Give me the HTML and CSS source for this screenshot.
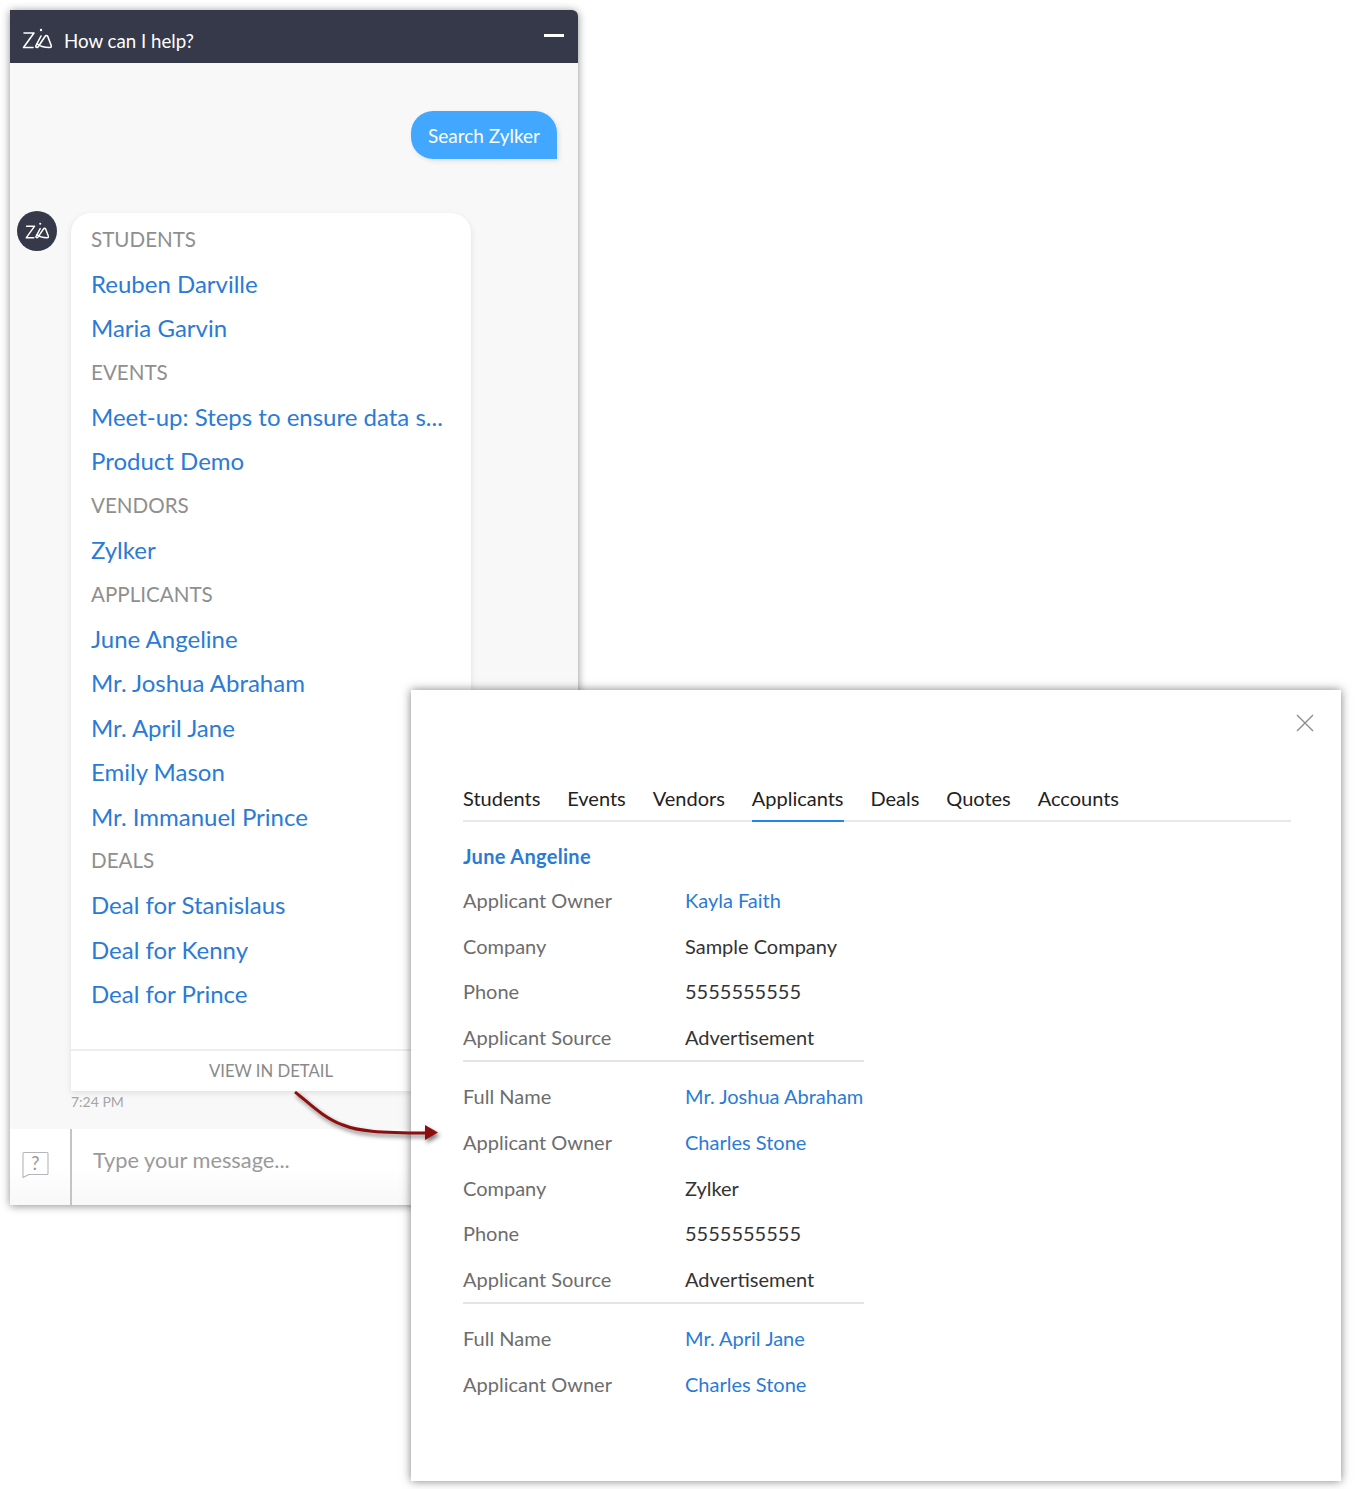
FILE: index.html
```html
<!DOCTYPE html>
<html lang="en">
<head>
  <meta charset="UTF-8">
  <title>How can I help?</title>
  <link rel="stylesheet" href="styles.css">
</head>
<body>

  <div class="chat">
    <header class="chat-head">
      <svg class="logo" viewBox="0 0 30 22" fill="none" stroke="#fff" stroke-width="1.600" stroke-linecap="round" stroke-linejoin="round">
        <path d="M2 5h10L1.500 19.500h9.500"/>
        <path d="M19 8l-5 9.500c-.8 1.500.5 2.500 2 1.500L23 8.500c.8-1.300 2-1.300 2.800 0l3.400 9c.5 1.300-.2 2-1.400 2-5 0-10-1-13-4"/>
        <circle cx="19" cy="2" r="1.200" fill="#fff" stroke="none"/>
      </svg>
      <span class="chat-title">How can I help?</span>
      <span class="minimize"></span>
    </header>

    <div class="chat-body">
      <div class="bubble">Search Zylker</div>

      <div class="reply">
        <div class="avatar">
          <svg class="logo-small" viewBox="0 0 30 22" fill="none" stroke="#fff" stroke-width="1.800" stroke-linecap="round" stroke-linejoin="round">
            <path d="M2 5h10L1.500 19.500h9.500"/>
            <path d="M19 8l-5 9.500c-.8 1.500.5 2.500 2 1.500L23 8.500c.8-1.300 2-1.300 2.800 0l3.400 9c.5 1.300-.2 2-1.400 2-5 0-10-1-13-4"/>
            <circle cx="19" cy="2" r="1.300" fill="#fff" stroke="none"/>
          </svg>
        </div>
        <div class="reply-main">
          <div class="card">
            <ul class="results">
              <li class="group">STUDENTS</li>
              <li><a href="#">Reuben Darville</a></li>
              <li><a href="#">Maria Garvin</a></li>
              <li class="group">EVENTS</li>
              <li><a href="#">Meet-up: Steps to ensure data s...</a></li>
              <li><a href="#">Product Demo</a></li>
              <li class="group">VENDORS</li>
              <li><a href="#">Zylker</a></li>
              <li class="group">APPLICANTS</li>
              <li><a href="#">June Angeline</a></li>
              <li><a href="#">Mr. Joshua Abraham</a></li>
              <li><a href="#">Mr. April Jane</a></li>
              <li><a href="#">Emily Mason</a></li>
              <li><a href="#">Mr. Immanuel Prince</a></li>
              <li class="group">DEALS</li>
              <li><a href="#">Deal for Stanislaus</a></li>
              <li><a href="#">Deal for Kenny</a></li>
              <li><a href="#">Deal for Prince</a></li>
            </ul>
            <div class="card-foot">VIEW IN DETAIL</div>
          </div>
          <div class="time">7:24 PM</div>
        </div>
      </div>
    </div>

    <footer class="chat-input">
      <div class="help-cell">
        <svg class="help-icon" viewBox="0 0 28 28" fill="none" stroke="#b4b6ba" stroke-width="1.100" stroke-linejoin="round">
          <path d="M1 3.500a1 1 0 0 1 1-1h23a1 1 0 0 1 1 1v20a1 1 0 0 1-1 1H7l-6 3z"/>
        </svg>
        <span class="help-mark">?</span>
      </div>
      <div class="placeholder">Type your message...</div>
    </footer>
  </div>

  <div class="panel">
    <svg class="close" viewBox="0 0 18 18" fill="none" stroke="#8a8a8a" stroke-width="1.300">
      <path d="M1 1l16 16M17 1L1 17"/>
    </svg>

    <nav class="tabs">
      <a href="#">Students</a>
      <a href="#">Events</a>
      <a href="#">Vendors</a>
      <a href="#" class="active">Applicants</a>
      <a href="#">Deals</a>
      <a href="#">Quotes</a>
      <a href="#">Accounts</a>
    </nav>

    <h2 class="record-name">June Angeline</h2>

    <dl class="record">
      <dt>Applicant Owner</dt><dd><a href="#">Kayla Faith</a></dd>
      <dt>Company</dt><dd>Sample Company</dd>
      <dt>Phone</dt><dd>5555555555</dd>
      <dt>Applicant Source</dt><dd>Advertisement</dd>
    </dl>

    <dl class="record">
      <dt>Full Name</dt><dd><a href="#">Mr. Joshua Abraham</a></dd>
      <dt>Applicant Owner</dt><dd><a href="#">Charles Stone</a></dd>
      <dt>Company</dt><dd>Zylker</dd>
      <dt>Phone</dt><dd>5555555555</dd>
      <dt>Applicant Source</dt><dd>Advertisement</dd>
    </dl>

    <dl class="record">
      <dt>Full Name</dt><dd><a href="#">Mr. April Jane</a></dd>
      <dt>Applicant Owner</dt><dd><a href="#">Charles Stone</a></dd>
    </dl>
  </div>

  <svg class="arrow" viewBox="0 0 150 50" fill="none">
    <path d="M2 1C14 10 30 27 50 34c15 6 35 8 83 8" stroke="#8e0d0d" stroke-width="3"/>
    <path d="M132 34l13 7.500-13 7.500z" fill="#8e0d0d"/>
  </svg>

</body>
</html>
```

FILE: styles.css
```css
* {
  margin: 0;
  padding: 0;
  box-sizing: border-box;
}

body {
  font-family: "Lato", "Liberation Sans", sans-serif;
  background-color: white;
  color: #333;
  padding: 10px;
  height: 1489px;
  overflow: hidden;
  position: relative;
}

a {
  color: #2a7bd6;
  text-decoration: none;
}

/* chat window */
.chat {
  width: 568px;
  height: 1195px;
  display: flex;
  flex-direction: column;
  background-color: #f8f8f8;
  border-top-right-radius: 6px;
  box-shadow: 0 1px 8px rgba(0,0,0,0.45);
}

.chat-head {
  height: 53px;
  flex: none;
  display: flex;
  align-items: center;
  background-color: #363949;
  border-top-right-radius: 6px;
  padding: 0 14px 0 12px;
  color: white;
}

.logo {
  width: 30px;
  height: 22px;
  margin: 5px 12px 0 0;
}

.chat-title {
  font-size: 18.7px;
  flex: 1;
  padding-top: 8px;
}

.minimize {
  width: 20px;
  height: 3px;
  background-color: white;
  margin-bottom: 3px;
}

.chat-body {
  flex: 1;
  padding-top: 48px;
  display: flex;
  flex-direction: column;
}

.bubble {
  align-self: flex-end;
  margin-right: 21px;
  width: 146px;
  height: 48px;
  line-height: 50px;
  text-align: center;
  font-size: 19px;
  color: white;
  background-color: #42a8ff;
  border-radius: 22px 22px 0 22px;
  box-shadow: 2px 2px 5px rgba(0,0,0,0.1);
}

.reply {
  display: flex;
  margin-top: 52px;
  padding-left: 7px;
}

.avatar {
  width: 40px;
  height: 40px;
  flex: none;
  border-radius: 50%;
  background-color: #363949;
  display: flex;
  align-items: center;
  justify-content: center;
}

.logo-small {
  width: 24px;
  height: 18px;
}

.reply-main {
  margin: 2px 0 0 14px;
}

.card {
  width: 400px;
  height: 878px;
  display: flex;
  flex-direction: column;
  background-color: white;
  border-radius: 20px 20px 0 0;
  box-shadow: 0 2px 6px rgba(0,0,0,0.1);
}

.results {
  flex: 1;
  list-style: none;
  padding: 4.5px 20px 0;
}

.results li {
  height: 44.4px;
  line-height: 44.4px;
  font-size: 24px;
  white-space: nowrap;
}

.results .group {
  font-size: 20.6px;
  line-height: 42.4px;
  color: #8f8f8f;
}

.card-foot {
  height: 42px;
  line-height: 40px;
  text-align: center;
  font-size: 16.7px;
  color: #8a8a8a;
  border-top: 2px solid #eeeeee;
}

.time {
  font-size: 14px;
  color: #a5a5a5;
  margin-top: 2px;
}

.chat-input {
  height: 76px;
  flex: none;
  display: flex;
  background: linear-gradient(#ffffff, #ffffff 50%, #f8f8f8);
}

.help-cell {
  width: 62px;
  border-right: 2px solid #c4c4c4;
  position: relative;
}

.help-icon {
  width: 28px;
  height: 28px;
  margin: 21px 0 0 12px;
}

.help-mark {
  position: absolute;
  left: 21px;
  top: 22px;
  font-size: 19px;
  color: #9a9a9a;
}

.placeholder {
  font-size: 21.8px;
  color: #9a9a9a;
  padding: 17px 0 0 21px;
}

/* detail panel */
.panel {
  position: absolute;
  left: 411px;
  top: 690px;
  width: 930px;
  height: 791px;
  padding: 96px 50px 0 52px;
  background-color: white;
  box-shadow: 0 0 9px rgba(0,0,0,0.5);
  font-size: 20px;
}

.close {
  position: absolute;
  right: 27.5px;
  top: 24px;
  width: 18px;
  height: 18px;
}

.tabs {
  display: flex;
  gap: 26.9px;
  border-bottom: 2px solid #e8e8e8;
  height: 36px;
}

.tabs a {
  color: #222;
  height: 36px;
  line-height: 25px;
}

.tabs .active {
  border-bottom: 2px solid #1f86ef;
}

.record-name {
  font-size: 20px;
  font-weight: bold;
  letter-spacing: 0.3px;
  color: #2a7bd6;
  line-height: 28px;
  margin-top: 20px;
}

.record {
  width: 401px;
  display: grid;
  grid-template-columns: 222px 1fr;
  grid-auto-rows: 45.6px;
  line-height: 45.6px;
  padding-top: 8px;
  border-bottom: 2px solid #e4e4e4;
  margin-bottom: 4px;
}

.record:last-child {
  border-bottom: none;
}

.record dt {
  color: #6d6d6d;
}

.record dd {
  color: #333;
  white-space: nowrap;
}

/* arrow between the windows */
.arrow {
  position: absolute;
  left: 293px;
  top: 1091px;
  width: 150px;
  height: 50px;
  filter: drop-shadow(2px 3px 2px rgba(0,0,0,0.5));
}
```
